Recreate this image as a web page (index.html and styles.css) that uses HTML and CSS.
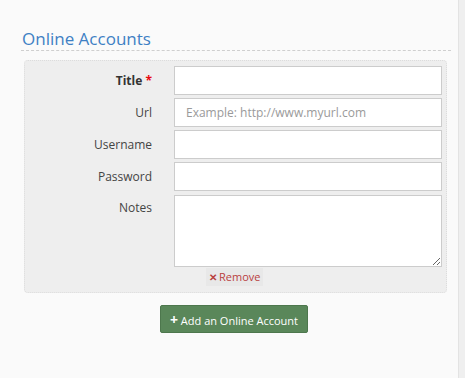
FILE: index.html
```html
<!DOCTYPE html>
<html lang="en">
<head>
  <meta charset="UTF-8">
  <meta name="viewport" content="width=device-width, initial-scale=1.0">
  <title>Online Accounts</title>
  <link rel="stylesheet" href="styles.css">
</head>
<body>
  <div class="page">
    <main class="content">
      <h2 class="section-heading">Online Accounts</h2>

      <div class="account-panel">
        <div class="form-row">
          <label class="form-label required" for="title">Title <span class="star">*</span></label>
          <input id="title" type="text">
        </div>
        <div class="form-row">
          <label class="form-label" for="url">Url</label>
          <input id="url" type="text" placeholder="Example: http://www.myurl.com">
        </div>
        <div class="form-row">
          <label class="form-label" for="username">Username</label>
          <input id="username" type="text">
        </div>
        <div class="form-row">
          <label class="form-label" for="password">Password</label>
          <input id="password" type="text">
        </div>
        <div class="form-row top">
          <label class="form-label" for="notes">Notes</label>
          <textarea id="notes"></textarea>
        </div>
        <div class="remove-row">
          <button class="remove-btn"><span class="x">&#x2715;</span>Remove</button>
        </div>
      </div>

      <div class="button-container">
        <button class="add-btn"><span class="plus">+</span> Add an Online Account</button>
      </div>
    </main>
    <aside class="sidebar"></aside>
  </div>
</body>
</html>
```

FILE: styles.css
```css
:root {
  --blue: #3e80c4;
  --panel: #eeeeee;
  --field-border: #cccccc;
  --green: #5a875a;
  --red: #b9403f;
}

* {
  margin: 0;
  padding: 0;
  box-sizing: border-box;
}

body {
  font-family: 'Open Sans', 'Noto Sans', sans-serif;
  font-size: 12px;
  color: #444;
  background-color: #fafafa;
}

.page {
  display: flex;
  min-height: 378px;
}

.content {
  flex: 1;
  padding: 29px 7px 0 21px;
}

.sidebar {
  width: 7px;
  background-color: #efefef;
  border-left: 1px solid #e3e3e3;
}

.section-heading {
  font-size: 17px;
  font-weight: 400;
  line-height: 20px;
  color: var(--blue);
  padding-left: 1px;
  padding-bottom: 1px;
  border-bottom: 1px dashed #cfcfcf;
}

.account-panel {
  margin: 9px 4px 0 3px;
  padding: 5px 4px 6px 0;
  background-color: var(--panel);
  border: 1px dotted #dcdcdc;
  border-radius: 4px;
  display: flex;
  flex-direction: column;
  gap: 3px;
}

.form-row {
  display: flex;
  align-items: center;
}

.form-row.top {
  align-items: flex-start;
  margin-top: 1px;
}

.form-label {
  width: 127px;
  margin-right: 22px;
  text-align: right;
  line-height: 16px;
}

.form-row.top .form-label {
  padding-top: 5px;
}

.required {
  font-weight: 700;
  color: #333;
}

.star {
  color: #e8080f;
}

input, textarea {
  flex: 1;
  height: 29px;
  border: 1px solid var(--field-border);
  background: #fff;
  font-family: inherit;
  font-size: 12px;
  padding: 0 11px;
  color: #444;
}

input::placeholder {
  color: #9a9a9a;
}

textarea {
  height: 72px;
  padding: 5px 11px;
  resize: vertical;
}

.remove-row {
  margin-top: -2px;
  padding-left: 181px;
}

.remove-btn {
  background-color: #e8e8e8;
  border: none;
  color: var(--red);
  font-family: inherit;
  font-size: 11px;
  line-height: 17px;
  padding: 0 3px;
  cursor: pointer;
}

.remove-btn .x {
  font-size: 10px;
  font-weight: 700;
  margin-right: 2px;
}

.button-container {
  display: flex;
  justify-content: center;
  margin-top: 12px;
  padding-right: 4px;
}

.add-btn {
  background-color: var(--green);
  color: #fff;
  border: 1px solid #4d774d;
  border-radius: 2px;
  font-family: inherit;
  font-size: 11px;
  height: 28px;
  padding: 0 9px;
  cursor: pointer;
}

.add-btn .plus {
  font-weight: 700;
  font-size: 14px;
}
```
